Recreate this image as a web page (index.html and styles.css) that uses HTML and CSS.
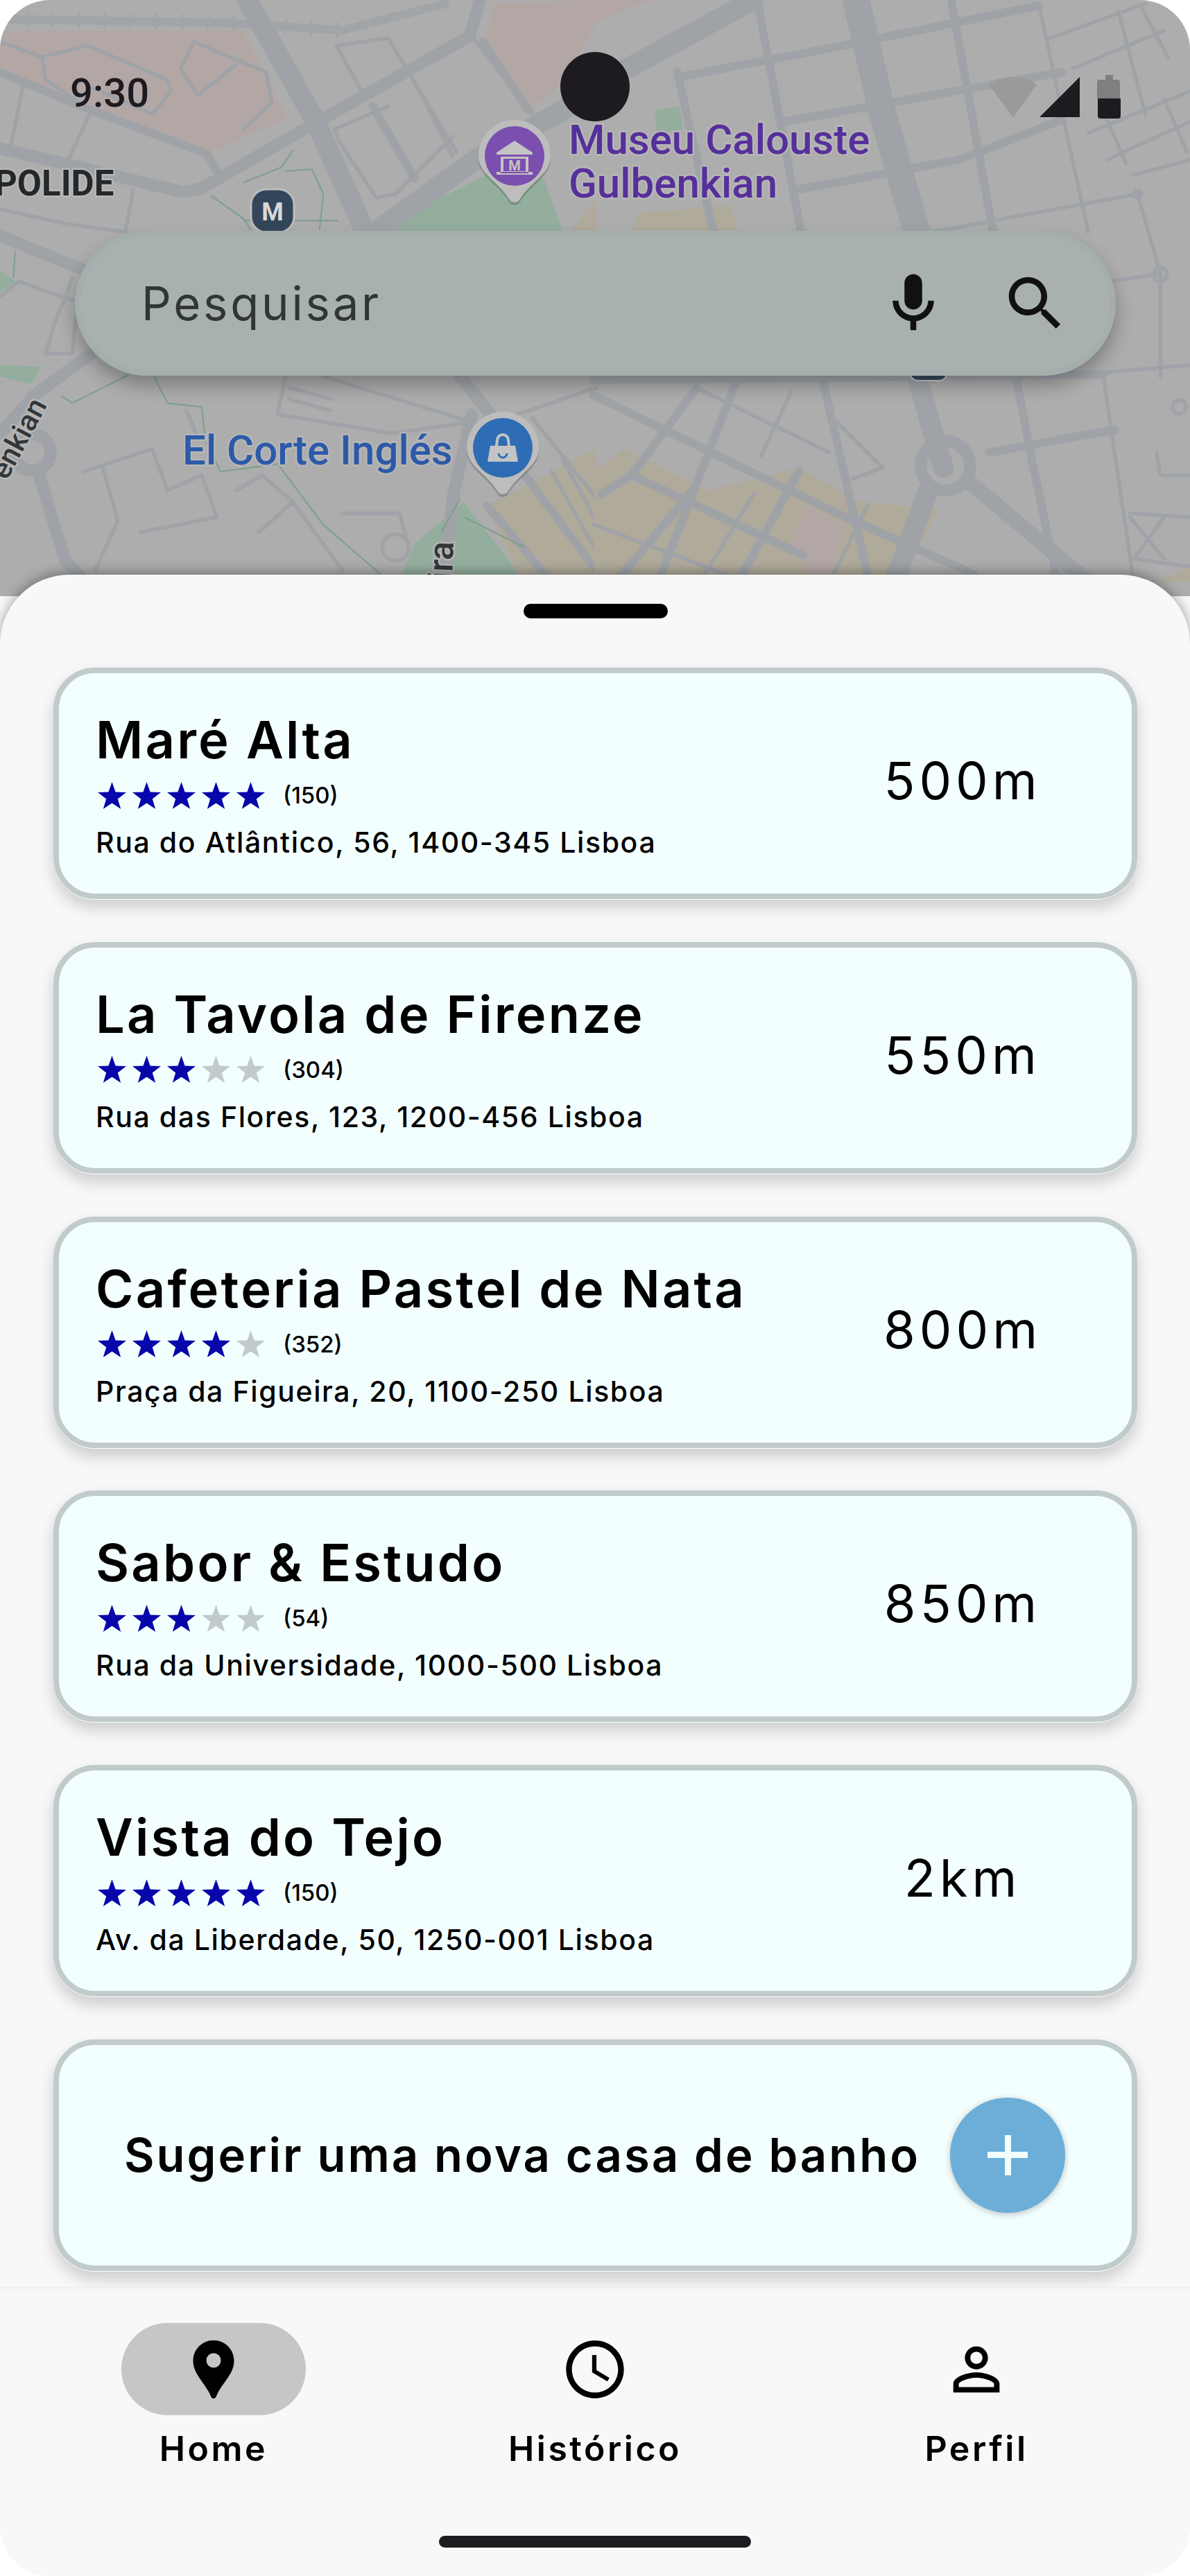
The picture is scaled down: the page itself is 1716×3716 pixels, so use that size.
FILE: index.html
```html
<!DOCTYPE html>
<html lang="pt">
<head>
<meta charset="utf-8">
<title>Casas de banho</title>
<link rel="stylesheet" href="styles.css">
</head>
<body>
<svg class="defs" width="0" height="0" aria-hidden="true">
  <symbol id="star" viewBox="0 0 41 39"><polygon points="20.5,0 25.6,14.6 41,15 28.8,24.4 33.2,39 20.5,30.4 7.8,39 12.2,24.4 0,15 15.400,14.6"/></symbol>
</svg>
<div class="screen">
  <section class="map-area">
    <svg class="map" viewBox="0 0 1716 860" width="1716" height="860" aria-hidden="true">
      <rect class="land" width="1716" height="860"/>
      <g transform="scale(.5485)">
        <polygon class="pink" points="0,80 640,80 755,310 545,405 230,280 0,190"/>
        <polygon class="pink" points="1270,110 1300,10 1568,0 1568,60 1480,220 1390,290"/>
        <polygon class="green" points="1040,610 1040,580 1280,460 1430,470 1480,610"/>
        <polygon class="green" points="0,710 40,740 0,770"/>
        <polygon class="green" points="0,960 110,965 80,1010 0,990"/>
        <polygon class="green" points="1050,1530 1090,1430 1220,1320 1380,1530"/>
        <polygon class="tan" points="1280,1330 1568,1180 1568,1530 1370,1530"/>
        <polygon class="tan" points="1500,610 1568,520 1568,610"/>
        <g class="road rail">
          <polyline points="0,50 600,60 900,80 1170,10"/>
        </g>
        <g class="road ties">
          <polyline points="0,50 600,60 900,80"/>
        </g>
        <g class="road xl">
          <polyline points="650,0 830,320 960,610"/>
          <polyline points="1000,600 1250,420 1568,240"/>
        </g>
        <g class="road l">
          <polyline points="0,390 480,505 530,495 800,340 1235,95 1262,0"/>
          <polyline points="0,620 220,710"/>
          <polyline points="240,930 90,1040 0,1140"/>
          <polyline points="1240,1090 1190,1310 1165,1530"/>
          <polyline points="100,1240 170,1470 220,1530"/>
          <polyline points="1210,990 1290,1090"/>
          <circle cx="85" cy="1190" r="48"/>
        </g>
        <g class="road m">
          <polyline points="0,190 240,290 545,405 580,470"/>
          <polyline points="980,280 1090,470"/>
          <polyline points="1390,290 1270,110"/>
          <polyline points="1380,1250 1568,1500"/>
          <polyline points="1280,1330 1450,1530"/>
        </g>
        <g class="road s">
          <polyline points="240,290 180,420"/>
          <polyline points="0,110 110,150 230,120 440,210 450,240 400,300 240,230"/>
          <polyline points="110,150 120,210 240,290"/>
          <polyline points="480,170 510,110 700,190 715,270 640,340"/>
          <polyline points="475,180 520,250 620,170"/>
          <polyline points="885,120 1020,100 1200,400"/>
          <polyline points="885,120 950,240"/>
          <polyline points="880,340 890,370 990,520 1040,510 1190,360"/>
          <polyline points="880,340 1020,280"/>
          <polyline points="1090,215 1190,410"/>
          <polyline points="1240,95 1400,300"/>
          <polyline points="350,500 330,610"/>
          <polyline points="60,230 25,400"/>
          <polyline points="0,550 180,590 330,610"/>
          <polyline points="0,780 50,740 190,790"/>
          <polyline points="190,730 170,790 150,830 120,930 190,930 200,830"/>
          <polyline points="850,990 1240,1110"/>
          <polyline points="750,990 730,1090 1030,1140 1240,1110"/>
          <polyline points="760,1020 870,1050"/>
          <polyline points="760,1050 870,1080"/>
          <polyline points="220,1240 400,1180 440,1290 530,1250 570,1360 370,1400"/>
          <polyline points="270,1230 310,1370 250,1500"/>
          <polyline points="680,1400 770,1320 900,1500"/>
          <polyline points="620,1290 690,1250 770,1320"/>
          <polyline points="900,1350 1050,1350 1070,1420"/>
          <circle cx="1040" cy="1440" r="35"/>
          <polyline points="1360,1090 1568,1020"/>
          <polyline points="1400,1100 1568,1310"/>
          <polyline points="490,1080 520,1150"/>
          <polyline points="1450,1240 1568,1450"/>
          <polyline points="1480,1210 1568,1370"/>
        </g>
        <g class="trail">
          <polyline points="770,395 740,440 640,480"/>
          <polyline points="555,515 640,575 660,605"/>
          <polyline points="750,450 820,445 850,510 840,605"/>
          <polyline points="640,580 890,580"/>
          <polyline points="160,1040 190,1060 340,985"/>
          <polyline points="405,990 440,1060 530,1070 540,1160 580,1240 660,1230 730,1220 850,1380 1000,1510"/>
          <polyline points="1210,1310 1160,1400"/>
          <polyline points="1220,1360 1380,1440"/>
          <polyline points="40,660 35,730"/>
        </g>
      </g>
      <g transform="translate(856 0) scale(.5485)">
        <polygon class="pink" points="0,0 150,0 0,60"/>
        <polygon class="tan" points="0,1240 80,1180 300,1290 540,1230 700,1320 910,1340 800,1530 0,1530"/>
        <polygon class="pink" points="520,1430 560,1330 660,1380 620,1530 565,1510"/>
        <polygon class="green" points="160,290 225,280 235,340 165,350"/>
        <polygon class="tan" points="100,610 120,560 360,540 380,610"/>
        <polygon class="tan" points="1480,1530 1568,1490 1568,1530"/>
        <g class="road xl">
          <polyline class="w70" points="690,0 760,300 850,610"/>
          <polyline points="70,190 420,0"/>
          <polyline points="850,990 890,1130 920,1230"/>
          <polyline points="880,1290 790,1530"/>
          <polyline class="w40" points="990,1270 1300,1530"/>
        </g>
        <g class="road l">
          <circle cx="925" cy="1225" r="65"/>
        </g>
        <g class="road m">
          <polyline points="220,190 315,610"/>
          <polyline points="430,0 545,610"/>
          <polyline points="940,0 1050,610"/>
          <polyline points="240,200 680,115 1170,15"/>
          <polyline points="500,320 1230,190"/>
          <polyline points="530,500 960,420 1040,390 1230,315"/>
          <polyline points="0,1040 640,1350 1000,1510"/>
          <polyline points="270,1020 100,1250 20,1300"/>
          <polyline points="380,990 170,1530"/>
          <polyline points="100,1250 550,1460"/>
          <polyline points="600,990 720,1510"/>
          <polyline points="1040,1190 1370,1130"/>
          <polyline points="1110,990 1150,1200 1220,1530"/>
          <polyline points="0,1000 1340,985"/>
          <polyline points="540,1240 380,1530"/>
          <polyline points="260,1290 60,1530"/>
        </g>
        <g class="road s">
          <polyline points="1170,10 1300,610"/>
          <polyline points="890,610 1430,510"/>
          <polyline points="1200,100 1450,10"/>
          <polyline points="1260,180 1500,80"/>
          <polyline points="1300,350 1568,240"/>
          <polyline points="1350,420 1568,320"/>
          <polyline points="1420,460 1568,420"/>
          <polyline points="1380,30 1450,300"/>
          <polyline points="1440,20 1510,150"/>
          <polyline points="1330,270 1400,430"/>
          <polyline points="1500,260 1560,400"/>
          <polyline points="1430,510 1490,720 1490,990"/>
          <polyline points="1360,740 1490,720"/>
          <polyline points="1340,980 1568,960"/>
          <polyline points="1340,990 1420,1530"/>
          <polyline points="1480,1190 1490,1250 1568,1250"/>
          <polyline points="1410,1350 1568,1360"/>
          <polyline points="1420,1470 1568,1490"/>
          <polyline points="640,1110 760,1230 680,1260"/>
          <polyline points="1410,1360 1500,1470"/>
          <polyline points="1500,1360 1420,1470"/>
          <polyline points="270,1020 620,1190"/>
          <polyline points="520,1030 440,1200"/>
          <polyline points="420,1300 280,1530"/>
          <polyline points="0,1380 400,1530"/>
          <polyline points="720,1330 620,1530"/>
          <circle cx="1490" cy="722" r="18"/>
          <circle cx="1430" cy="510" r="10"/>
          <circle cx="1540" cy="1070" r="18"/>
        </g>
      </g>
      <rect class="metro-peek" x="1312" y="525" width="54" height="24" rx="12"/>
      <g class="metro">
        <rect x="362" y="273" width="62" height="62" rx="22"/>
        <text class="metro-m" x="393" y="318">M</text>
      </g>
      <g class="pin">
        <path class="pin-shadow" d="M690 225a52 52 0 1 1 104 0c0 26-28 36-44 62a9 9 0 0 1-16 0c-16-26-44-36-44-62z"/>
        <path class="pin-halo" d="M690 225a52 52 0 1 1 104 0c0 26-28 36-44 62a9 9 0 0 1-16 0c-16-26-44-36-44-62z"/>
        <circle class="museum-dot" cx="742" cy="225" r="43"/>
        <path class="pin-glyph" d="M716 220l26-17 26 17v3h-52zM722 226h4v24h-4zM758 226h4v24h-4zM716 248h52v4h-52zM726 226h32v3h-32zM726 247h32v3h-32z"/>
        <text class="pin-m" x="742" y="246">M</text>
      </g>
      <g class="pin">
        <path class="pin-shadow" d="M673 646a52 52 0 1 1 104 0c0 26-28 36-44 62a9 9 0 0 1-16 0c-16-26-44-36-44-62z"/>
        <path class="pin-halo" d="M673 646a52 52 0 1 1 104 0c0 26-28 36-44 62a9 9 0 0 1-16 0c-16-26-44-36-44-62z"/>
        <circle class="shop-dot" cx="725" cy="646" r="43"/>
        <path class="pin-glyph" d="M714 643l1-8a10 10 0 0 1 20 0l1 8h7l4 23h-44l4-23zM718 643h14l-1-8a6 6 0 0 0-12 0z"/>
        <path class="shop-smile" d="M719 654a6 6 0 0 0 12 0"/>
      </g>
      <text class="map-label dark" x="-8" y="282">POLIDE</text>
      <text class="map-label museum" x="820" y="222">Museu Calouste</text>
      <text class="map-label museum" x="820" y="285">Gulbenkian</text>
      <text class="map-label shop" x="263" y="670">El Corte Inglés</text>
      <text class="map-label street" transform="translate(10 694) rotate(-62)">enkian</text>
      <text class="map-label street big" transform="translate(652 838) rotate(-88)">ira</text>
    </svg>

    <div class="status">
      <span class="time">9:30</span>
      <svg class="status-icons" viewBox="0 0 190 63" width="190" height="63" aria-hidden="true">
        <path class="wifi" d="M0 14C10 6 22 3 35 3s25 3 34 11L35 62z"/>
        <path class="solid" d="M131 3v58H73z"/>
        <path class="ghost" d="M168 0h11v7h6a4 4 0 0 1 4 4v23h-33V11a4 4 0 0 1 4-4h8z"/>
        <path class="solid" d="M157 34h33v25a4 4 0 0 1-4 4h-25a4 4 0 0 1-4-4z"/>
      </svg>
    </div>
    <span class="camera"></span>

    <div class="search">
      <span class="search-text">Pesquisar</span>
      <svg class="search-icon" viewBox="0 0 24 24" aria-hidden="true"><path d="M12 14c1.66 0 3-1.34 3-3V5c0-1.66-1.34-3-3-3S9 3.34 9 5v6c0 1.66 1.34 3 3 3zM17 11c0 2.76-2.24 5-5 5s-5-2.24-5-5H5c0 3.53 2.61 6.43 6 6.92V21h2v-3.08c3.39-.49 6-3.39 6-6.92h-2z"/></svg>
      <svg class="search-icon" viewBox="0 0 24 24" aria-hidden="true"><path d="M15.5 14h-.79l-.28-.27C15.41 12.59 16 11.11 16 9.5 16 5.91 13.09 3 9.5 3S3 5.91 3 9.5 5.91 16 9.5 16c1.61 0 3.09-.59 4.23-1.57l.27.28v.79l5 4.99L20.49 19l-4.99-5zm-6 0C7.01 14 5 11.99 5 9.5S7.01 5 9.5 5 14 7.01 14 9.5 11.99 14 9.5 14z"/></svg>
    </div>
  </section>

  <section class="sheet">
    <div class="handle"></div>
    <ul class="list">
      <li class="card">
        <div class="info">
          <h2 class="name">Maré Alta</h2>
          <div class="rating">
            <svg class="star on"><use href="#star"/></svg><svg class="star on"><use href="#star"/></svg><svg class="star on"><use href="#star"/></svg><svg class="star on"><use href="#star"/></svg><svg class="star on"><use href="#star"/></svg>
            <span class="count">(150)</span>
          </div>
          <p class="address">Rua do Atlântico, 56, 1400-345 Lisboa</p>
        </div>
        <span class="distance">500m</span>
      </li>
      <li class="card">
        <div class="info">
          <h2 class="name">La Tavola de Firenze</h2>
          <div class="rating">
            <svg class="star on"><use href="#star"/></svg><svg class="star on"><use href="#star"/></svg><svg class="star on"><use href="#star"/></svg><svg class="star off"><use href="#star"/></svg><svg class="star off"><use href="#star"/></svg>
            <span class="count">(304)</span>
          </div>
          <p class="address">Rua das Flores, 123, 1200-456 Lisboa</p>
        </div>
        <span class="distance">550m</span>
      </li>
      <li class="card">
        <div class="info">
          <h2 class="name">Cafeteria Pastel de Nata</h2>
          <div class="rating">
            <svg class="star on"><use href="#star"/></svg><svg class="star on"><use href="#star"/></svg><svg class="star on"><use href="#star"/></svg><svg class="star on"><use href="#star"/></svg><svg class="star off"><use href="#star"/></svg>
            <span class="count">(352)</span>
          </div>
          <p class="address">Praça da Figueira, 20, 1100-250 Lisboa</p>
        </div>
        <span class="distance">800m</span>
      </li>
      <li class="card">
        <div class="info">
          <h2 class="name">Sabor &amp; Estudo</h2>
          <div class="rating">
            <svg class="star on"><use href="#star"/></svg><svg class="star on"><use href="#star"/></svg><svg class="star on"><use href="#star"/></svg><svg class="star off"><use href="#star"/></svg><svg class="star off"><use href="#star"/></svg>
            <span class="count">(54)</span>
          </div>
          <p class="address">Rua da Universidade, 1000-500 Lisboa</p>
        </div>
        <span class="distance">850m</span>
      </li>
      <li class="card">
        <div class="info">
          <h2 class="name">Vista do Tejo</h2>
          <div class="rating">
            <svg class="star on"><use href="#star"/></svg><svg class="star on"><use href="#star"/></svg><svg class="star on"><use href="#star"/></svg><svg class="star on"><use href="#star"/></svg><svg class="star on"><use href="#star"/></svg>
            <span class="count">(150)</span>
          </div>
          <p class="address">Av. da Liberdade, 50, 1250-001 Lisboa</p>
        </div>
        <span class="distance">2km</span>
      </li>
      <li class="card suggest">
        <span class="suggest-text">Sugerir uma nova casa de banho</span>
        <span class="fab"><span class="plus"></span></span>
      </li>
    </ul>
  </section>

  <nav class="nav">
    <a class="nav-item">
      <span class="nav-pill active">
        <svg class="nav-icon" viewBox="0 0 100 100" aria-hidden="true"><path d="M50 8C33.7 8 20.5 21 20.5 37.5 20.5 55 34 66 44 84c2 4 2.500 8 6 8s4-4 6-8c10-18 23.500-29 23.500-46.500C79.500 21 66.300 8 50 8z"/><circle class="pin-hole" cx="50" cy="37" r="10.500"/></svg>
      </span>
      <span class="nav-label">Home</span>
    </a>
    <a class="nav-item">
      <span class="nav-pill">
        <svg class="nav-icon" viewBox="0 0 24 24" aria-hidden="true"><path d="M11.99 2C6.47 2 2 6.48 2 12s4.470 10 9.990 10C17.520 22 22 17.520 22 12S17.520 2 11.990 2zM12 20c-4.420 0-8-3.580-8-8s3.580-8 8-8 8 3.580 8 8-3.580 8-8 8zm.5-13H11v6l5.250 3.150.75-1.230-4.500-2.670z"/></svg>
      </span>
      <span class="nav-label">Histórico</span>
    </a>
    <a class="nav-item">
      <span class="nav-pill">
        <svg class="nav-icon" viewBox="0 0 24 24" aria-hidden="true"><path d="M12 5.900c1.160 0 2.100.94 2.100 2.100s-.94 2.100-2.100 2.100S9.900 9.160 9.900 8s.94-2.100 2.100-2.100m0 9c2.970 0 6.100 1.460 6.100 2.100v1.100H5.900V17c0-.64 3.130-2.100 6.100-2.100M12 4C9.790 4 8 5.790 8 8s1.790 4 4 4 4-1.790 4-4-1.790-4-4-4zm0 9c-2.670 0-8 1.340-8 4v3h16v-3c0-2.660-5.330-4-8-4z"/></svg>
      </span>
      <span class="nav-label">Perfil</span>
    </a>
    <span class="home-bar"></span>
  </nav>
</div>
</body>
</html>
```

FILE: styles.css
```css
* { box-sizing: border-box; }
html, body { margin: 0; padding: 0; background: #fff; }
.defs { position: absolute; }
.screen {
  position: relative;
  width: 1716px;
  height: 3716px;
  border-radius: 72px;
  overflow: hidden;
  background: #f8f8f8;
  font-family: Inter, "Liberation Sans", sans-serif;
  color: #000;
}

/* map */
.map-area { position: relative; height: 829px; }
.map { position: absolute; left: 0; top: 0; }
.land { fill: #adadad; }
.pink { fill: #b3a7a5; }
.green { fill: #94ae9e; }
.tan { fill: #b0aa9b; }
.road { fill: none; stroke: #9fa3a8; stroke-linejoin: round; stroke-linecap: round; }
.rail { stroke-width: 22px; stroke: #a1a4a9; }
.ties { stroke-width: 40px; stroke: #a1a4a9; stroke-dasharray: 6 62; stroke-linecap: butt; }
.xl { stroke-width: 54px; }
.w70 { stroke-width: 72px; }
.w40 { stroke-width: 40px; }
.l { stroke-width: 32px; }
.m { stroke-width: 22px; }
.s { stroke-width: 10px; }
.trail { fill: none; stroke: #7fa08e; stroke-width: 4px; }
.metro-peek { fill: #34495e; stroke: #c8c8c8; stroke-width: 2px; }
.metro rect { fill: #33465a; stroke: #bdbdbd; stroke-width: 3px; }
.metro-m { font: 700 36px Roboto, sans-serif; fill: #d9d9d9; text-anchor: middle; }
.pin-halo { fill: #bdbdbd; }
.pin-shadow { fill: #000; opacity: .18; transform: translateY(4px); }
.museum-dot { fill: #7b4fae; }
.shop-dot { fill: #2e6db5; }
.pin-glyph { fill: #c4c4c4; fill-rule: evenodd; }
.pin-m { font: 700 20px Roboto, sans-serif; fill: #c4c4c4; text-anchor: middle; }
.shop-smile { fill: none; stroke: #2e6db5; stroke-width: 3px; }
.map-label {
  font-family: Roboto, sans-serif;
  font-weight: 500;
  font-size: 60px;
  paint-order: stroke;
  stroke: #b6b6b6;
  stroke-width: 5px;
  stroke-linejoin: round;
}
.dark { fill: #25282a; font-weight: 700; font-size: 51px; }
.museum { fill: #56309a; }
.shop { fill: #2d5aa8; }
.street { fill: #33373a; font-size: 42px; font-weight: 500; }
.big { font-size: 50px; }

/* status bar */
.status {
  position: relative;
  height: 333px;
  padding: 108px 100px 0 101px;
  display: flex;
  justify-content: space-between;
  align-items: flex-start;
}
.time {
  font: 500 58px/52px Roboto, sans-serif;
  color: #1d1b20;
}
.wifi { fill: #9a9a9a; }
.solid { fill: #1d1b20; }
.ghost { fill: #7f7f82; }
.camera {
  position: absolute;
  left: 808px;
  top: 75px;
  width: 100px;
  height: 100px;
  border-radius: 50%;
  background: #1d1b20;
}

/* search */
.search {
  position: relative;
  width: 1501px;
  height: 209px;
  margin-left: 108px;
  padding: 0 57px 0 88px;
  display: flex;
  align-items: center;
  gap: 74px;
  border: 8px solid #a4aeac;
  border-radius: 105px;
  background: #a9b1b0;
  box-shadow: 0 14px 26px rgba(0, 0, 0, .28);
}
.search-text {
  flex: 1;
  font-size: 67px;
  letter-spacing: 3.8px;
  color: #303535;
}
.search-icon { width: 102px; height: 102px; fill: #111113; }

/* bottom sheet */
.sheet {
  position: relative;
  height: 2471px;
  padding: 42px 76px 0 77px;
  border-radius: 100px 100px 0 0;
  background: #f8f8f8;
  box-shadow: 0 -5px 16px rgba(0, 0, 0, .3);
}
.handle {
  width: 208px;
  height: 21px;
  margin: 0 auto 71px;
  border-radius: 11px;
  background: #000;
}
.list {
  margin: 0;
  padding: 0;
  list-style: none;
  display: flex;
  flex-direction: column;
  gap: 61.8px;
}
.card {
  height: 334px;
  padding: 0 94px 0 56px;
  display: flex;
  align-items: center;
  justify-content: space-between;
  border: 8px solid #c1cbcc;
  border-radius: 60px;
  background: #f3ffff;
  box-shadow: 0 1px 0 0 #fff, 0 12px 22px rgba(0, 0, 0, .18);
}
.info { display: flex; flex-direction: column; padding-top: 6px; }
.name {
  margin: 0 0 0 -3px;
  font-size: 74px;
  line-height: 84px;
  font-weight: 600;
  letter-spacing: 3.2px;
}
.rating { display: flex; align-items: center; margin-top: 15px; height: 46px; }
.star { width: 41px; height: 39px; margin-right: 9px; flex: none; }
.on { fill: #0606aa; }
.off { fill: #c1cbcc; }
.count {
  margin-left: 17px;
  font-size: 33px;
  font-weight: 500;
}
.address {
  margin: 19px 0 0 -3px;
  font-size: 41px;
  line-height: 52px;
  font-weight: 500;
  letter-spacing: 1.6px;
}
.distance {
  width: 300px;
  padding-bottom: 8px;
  text-align: center;
  font-size: 74px;
  letter-spacing: 6px;
}
.suggest { padding: 0 96px 0 94px; }
.suggest-text {
  font-size: 67px;
  font-weight: 600;
  letter-spacing: 3px;
  white-space: nowrap;
}
.fab {
  width: 166px;
  height: 166px;
  flex: none;
  position: relative;
  border-radius: 50%;
  background: #6caed8;
  box-shadow: 0 2px 10px rgba(0, 0, 0, .25);
}
.plus {
  position: absolute;
  left: 54px;
  top: 54px;
  width: 58px;
  height: 58px;
  background:
    linear-gradient(#f3ffff, #f3ffff) center / 9px 58px no-repeat,
    linear-gradient(#f3ffff, #f3ffff) center / 58px 9px no-repeat;
}

/* navigation */
.nav {
  position: absolute;
  left: 0;
  right: 0;
  bottom: 0;
  height: 416px;
  padding: 50px 33px 0;
  display: flex;
  align-items: flex-start;
  background: #f8f8f8;
  border-top: 1px solid #e6e6ee;
}
.nav-item {
  width: 550px;
  display: flex;
  flex-direction: column;
  align-items: center;
}
.nav-pill {
  width: 266px;
  height: 133px;
  display: flex;
  align-items: center;
  justify-content: center;
  border-radius: 67px;
}
.active { background: #c6c6c6; }
.nav-icon { width: 100px; height: 100px; fill: #000; }
.pin-hole { fill: #c6c6c6; }
.nav-label {
  margin-top: 18px;
  font-size: 50px;
  line-height: 60px;
  font-weight: 600;
  letter-spacing: 3.5px;
}
.home-bar {
  position: absolute;
  left: 633px;
  top: 357px;
  width: 450px;
  height: 17px;
  border-radius: 9px;
  background: #1d1b20;
}
```
